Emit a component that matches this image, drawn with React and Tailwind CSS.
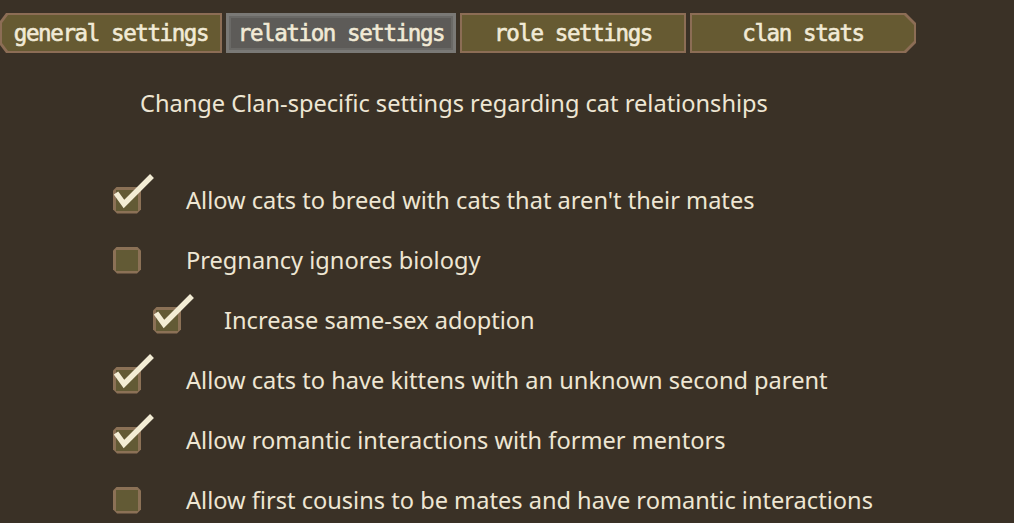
import React from 'react';

const tabs = [
  { label: 'general settings', w: 'w-[222px]', shape: 'left' },
  { label: 'relation settings', w: 'w-[230px]', active: true },
  { label: 'role settings', w: 'w-[226px]' },
  { label: 'clan stats', w: 'w-[226px]', shape: 'right' },
];

const rows = [
  { text: "Allow cats to breed with cats that aren't their mates", checked: true },
  { text: 'Pregnancy ignores biology', checked: false },
  { text: 'Increase same-sex adoption', checked: true, indent: true },
  { text: 'Allow cats to have kittens with an unknown second parent', checked: true },
  { text: 'Allow romantic interactions with former mentors', checked: true },
  { text: 'Allow first cousins to be mates and have romantic interactions', checked: false },
];

const Tab = ({ label, w, active, shape }) => {
  const clip =
    shape === 'left'
      ? '[clip-path:polygon(6px_0,100%_0,100%_100%,6px_100%,0_calc(100%-8px),0_8px)]'
      : shape === 'right'
      ? '[clip-path:polygon(0_0,calc(100%-10px)_0,100%_10px,100%_calc(100%-10px),calc(100%-10px)_100%,0_100%)]'
      : '';
  if (active) {
    return (
      <div className={`${w} h-[40px] bg-[#7a7976] p-[3px]`}>
        <div className="h-full border-2 border-[#6a6966] bg-[#5d5b58] flex items-center justify-center pt-[2px] text-[#f1ead6] text-[22.5px] tracking-[-1.4px] font-['DejaVu_Sans_Mono',monospace] [-webkit-text-stroke:0.6px_#f1ead6]">
          {label}
        </div>
      </div>
    );
  }
  return (
    <div className={`${w} h-[40px] bg-[#8c6d55] p-[2px] ${clip}`}>
      <div className={`h-full bg-[#665a32] flex items-center justify-center pt-[2px] text-[#f1ead6] text-[22.5px] tracking-[-1.4px] font-['DejaVu_Sans_Mono',monospace] [-webkit-text-stroke:0.6px_#f1ead6] ${clip}`}>
        {label}
      </div>
    </div>
  );
};

const Checkbox = ({ checked }) => (
  <div className="relative w-[28px] h-[27px] shrink-0">
    <div className="w-full h-full bg-[#8b7156] p-[3px] [clip-path:polygon(4px_0,calc(100%-4px)_0,100%_4px,100%_calc(100%-4px),calc(100%-4px)_100%,4px_100%,0_calc(100%-4px),0_4px)]">
      <div className="w-full h-full bg-[#625a35]" />
    </div>
    {checked && (
      <svg className="absolute left-0 top-[-14px]" width="44" height="44" viewBox="0 0 44 44">
        <polyline
          points="3,20 11,31 39,3"
          fill="none"
          stroke="#f2ecd4"
          strokeWidth="5.5"
          strokeLinejoin="miter"
        />
      </svg>
    )}
  </div>
);

export default function App() {
  return (
    <div className="w-[1014px] h-[523px] bg-[#3a3126] overflow-hidden font-['Noto_Sans','Open_Sans',sans-serif]">
      <div className="flex gap-[4px] pt-[13px]">
        {tabs.map((t) => (
          <Tab key={t.label} {...t} />
        ))}
      </div>
      <p className="pl-[140px] mt-[36px] text-[23.6px] leading-[28px] text-[#eee6d3]">
        Change Clan-specific settings regarding cat relationships
      </p>
      <div className="mt-[53px] flex flex-col">
        {rows.map((r) => (
          <div
            key={r.text}
            className={`h-[60px] flex items-center ${r.indent ? 'pl-[153px]' : 'pl-[113px]'}`}
          >
            <Checkbox checked={r.checked} />
            <span className={`text-[23.6px] leading-[28px] text-[#eee6d3] ${r.indent ? 'ml-[43px]' : 'ml-[45px]'}`}>
              {r.text}
            </span>
          </div>
        ))}
      </div>
    </div>
  );
}
